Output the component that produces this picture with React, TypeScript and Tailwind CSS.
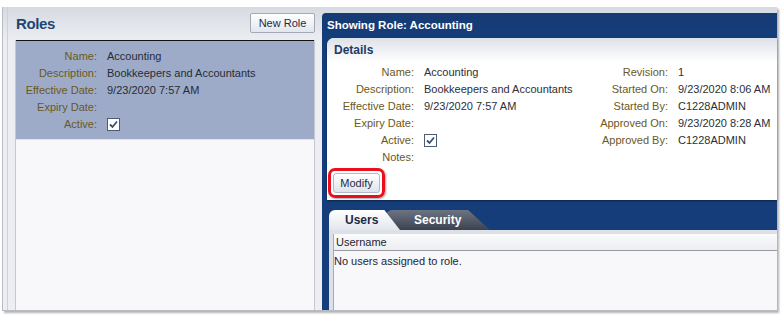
import React from 'react';

const font = { fontFamily: '"Liberation Sans", Arial, sans-serif' };

const Check: React.FC = () => (
  <span className="inline-flex h-[13px] w-[13px] items-center justify-center border border-[#4b5b78] bg-white">
    <svg width="9" height="9" viewBox="0 0 9 9">
      <path d="M1 4.5 L3.5 7 L8 1.5" fill="none" stroke="#3d4d6c" strokeWidth="1.8" />
    </svg>
  </span>
);

type Row = [string, React.ReactNode];

const leftRows: Row[] = [
  ['Name:', 'Accounting'],
  ['Description:', 'Bookkeepers and Accountants'],
  ['Effective Date:', '9/23/2020 7:57 AM'],
  ['Expiry Date:', ''],
  ['Active:', <Check />],
];

const detailRows: [string, React.ReactNode, string, string][] = [
  ['Name:', 'Accounting', 'Revision:', '1'],
  ['Description:', 'Bookkeepers and Accountants', 'Started On:', '9/23/2020 8:06 AM'],
  ['Effective Date:', '9/23/2020 7:57 AM', 'Started By:', 'C1228ADMIN'],
  ['Expiry Date:', '', 'Approved On:', '9/23/2020 8:28 AM'],
  ['Active:', <Check />, 'Approved By:', 'C1228ADMIN'],
  ['Notes:', '', '', ''],
];

export default function App() {
  return (
    <div className="h-[318px] w-[784px] overflow-hidden bg-white pt-[7px] pl-[2px]" style={font}>
      <div className="flex h-[304px] w-[775px] border-b border-l border-[#b9bbc2] bg-[linear-gradient(#d7dae2,#eceef3_34px,#eceef3)] shadow-[2px_2px_2px_rgba(0,0,0,0.3)]">
        {/* Roles list */}
        <div className="ml-[4px] flex w-[308px] flex-col border-l border-[#cfd1d7] pl-[7px]">
          <div className="flex h-[33px] items-start justify-between pt-[6px]">
            <h1 className="mt-[3px] ml-[1px] text-[15px] font-bold leading-none tracking-[-0.4px] text-[#1f4670]">Roles</h1>
            <button className="h-[20px] w-[65px] rounded-[2px] border border-[#a3a9b6] bg-[linear-gradient(#ffffff,#e2e6ee)] text-[11px] text-[#1d2a44]">
              New Role
            </button>
          </div>
          <div className="flex flex-1 flex-col border-x border-[#c6c8ce] bg-[#f8f8fa]">
            <div className="border-t border-[#111] bg-[#9dabc8] pt-[7px] pb-[6px]">
              <div className="grid grid-cols-[81px_1fr] gap-x-[10px] text-[11px]">
                {leftRows.map(([label, value]) => (
                  <React.Fragment key={label}>
                    <div className="flex h-[17px] items-center justify-end text-[#6b581c]">{label}</div>
                    <div className="flex h-[17px] items-center text-[#262b36]">{value}</div>
                  </React.Fragment>
                ))}
              </div>
            </div>
            <div className="h-px bg-[#dfe3ec]" />
          </div>
        </div>

        {/* Role detail */}
        <div className="mt-[6px] ml-[7px] flex w-[455px] flex-col rounded-tl-[4px] bg-[linear-gradient(#173a72,#143d7a_20px,#143d7a)]">
          <div className="flex h-[25px] items-center pl-[5px] text-[11.5px] font-bold text-white">Showing Role: Accounting</div>
          <div className="ml-[5px] h-[162px] rounded-tl-[7px] bg-white shadow-[0_1px_2px_rgba(0,0,0,0.4)]">
            <div className="h-[24px] rounded-tl-[7px] bg-[linear-gradient(#dde1e8,#ffffff)] pt-[6px] pl-[7px] text-[12px] font-bold leading-none text-[#1d3a66]">
              Details
            </div>
            <div className="grid grid-cols-[87px_150px_84px_1fr] gap-x-[10px] pt-[2px] text-[11px]">
              {detailRows.map(([l1, v1, l2, v2]) => (
                <React.Fragment key={l1}>
                  <div className="flex h-[17px] items-center justify-end text-[#6b581c]">{l1}</div>
                  <div className="flex h-[17px] items-center text-[#2b2f38]">{v1}</div>
                  <div className="flex h-[17px] items-center justify-end text-[#6b581c]">{l2}</div>
                  <div className="flex h-[17px] items-center text-[#2b2f38]">{v2}</div>
                </React.Fragment>
              ))}
            </div>
            <div className="mt-[2px] ml-[1px] inline-flex rounded-[7px] border-[3px] border-[#e8101c] p-[2px] shadow-[1px_1px_2px_rgba(0,0,0,0.35)]">
              <button className="h-[20px] w-[47px] rounded-[3px] border border-[#b2b8c4] bg-[linear-gradient(#ffffff,#dfe3eb)] text-[11px] text-[#1d2a44]">
                Modify
              </button>
            </div>
          </div>

          <div className="mt-[10px] ml-[7px] flex h-[20px] items-stretch">
            <div className="relative z-10 flex w-[71px] items-center rounded-tl-[6px] bg-[linear-gradient(#ffffff,#e3e6ed)] pl-[16px] text-[12px] font-bold text-[#1c2b48] [clip-path:polygon(0_0,78%_0,100%_100%,0_100%)]">
              Users
            </div>
            <div className="-ml-[14px] flex w-[104px] items-center rounded-tl-[6px] bg-[linear-gradient(#6c7482,#3b4351)] pl-[28px] text-[12px] font-bold text-white [clip-path:polygon(0_0,79%_0,100%_100%,0_100%)]">
              Security
            </div>
          </div>
          <div className="ml-[7px] flex flex-1 flex-col bg-[#dde0e7] pt-[4px] pl-[4px]">
            <div className="flex-1 border-l border-[#a9abb1] bg-[#f8f8fa] text-[11px] text-[#1f2430]">
              <div className="flex h-[17px] items-center border-b border-[#9a9ca2] bg-[linear-gradient(#fbfbfc,#eceef2)] pl-[2px]">Username</div>
              <div className="pt-[2px]">No users assigned to role.</div>
            </div>
          </div>
        </div>
      </div>
    </div>
  );
}
